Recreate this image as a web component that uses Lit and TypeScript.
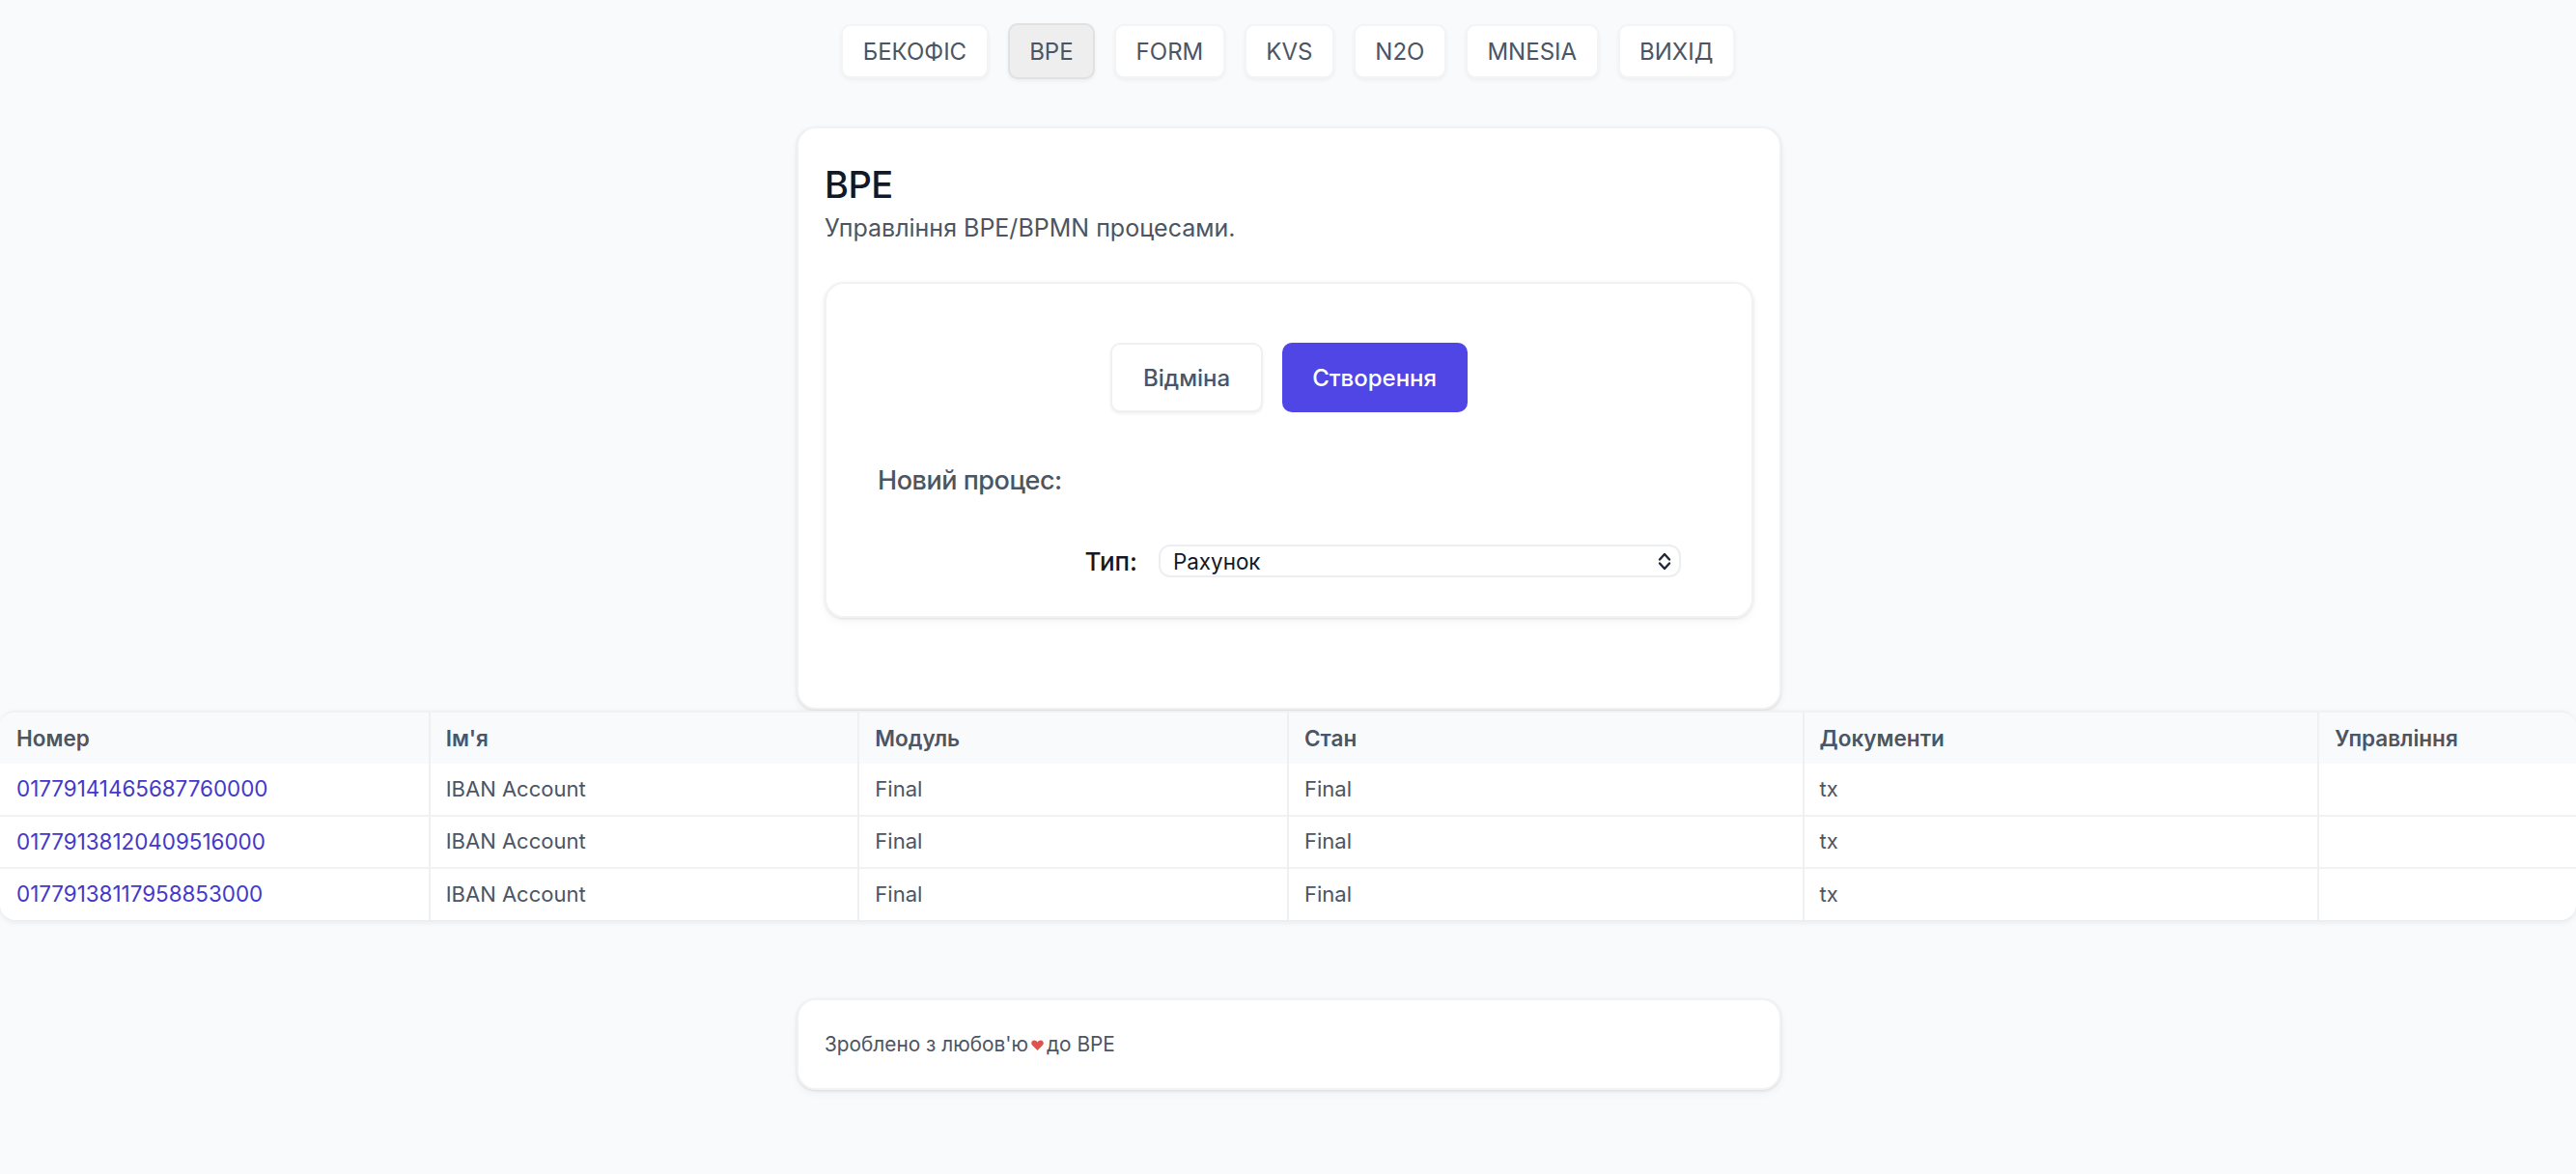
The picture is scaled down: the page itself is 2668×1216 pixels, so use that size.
import { LitElement, html, css } from "lit";
import { customElement } from "lit/decorators.js";

const NAV = ["БЕКОФІС", "BPE", "FORM", "KVS", "N2O", "MNESIA", "ВИХІД"];
const COLS = ["Номер", "Ім'я", "Модуль", "Стан", "Документи", "Управління"];
const ROWS = ["01779141465687760000", "01779138120409516000", "01779138117958853000"];

@customElement("app-root")
export class AppRoot extends LitElement {
  static styles = css`
    :host {
      display: block;
      min-height: 1216px;
      background: #f9fafb;
      font-family: Inter, "Noto Sans", sans-serif;
      color: #4b5563;
      --shadow: 0 1px 3px rgba(0, 0, 0, 0.1), 0 4px 10px rgba(0, 0, 0, 0.04);
    }
    .nav {
      display: flex;
      justify-content: center;
      align-items: center;
      gap: 20px;
      padding-top: 24px;
      height: 58px;
    }
    .nav button {
      height: 56px;
      padding: 0 20.5px;
      background: #fff;
      border: 2px solid #f3f4f6;
      border-radius: 10px;
      box-shadow: 0 2px 4px rgba(0, 0, 0, 0.05);
      font: 400 24px Inter, sans-serif;
      color: #4b5563;
    }
    .nav button.on {
      height: 58px;
      background: #eeeeef;
      border-color: #e0e1e3;
    }
    .card {
      box-sizing: border-box;
      width: 1020px;
      margin: 0 0 0 calc(50% - 509px);
      background: #fff;
      border: 2px solid #f1f2f4;
      border-radius: 20px;
      box-shadow: var(--shadow);
    }
    .main {
      margin-top: 49px;
      height: 604px;
      padding: 34px 27px 0;
    }
    h1 {
      margin: 0;
      font: 500 38px/48px Inter, sans-serif;
      color: #111827;
      letter-spacing: -0.5px;
    }
    .sub {
      margin: 5px 0 0;
      font: 400 25px/32px Inter, sans-serif;
    }
    .inner {
      box-sizing: border-box;
      height: 348px;
      margin-top: 40px;
      border: 2px solid #f1f2f4;
      border-radius: 20px;
      box-shadow: var(--shadow);
      padding: 61px 53px 0;
    }
    .actions {
      display: flex;
      justify-content: center;
      gap: 20px;
    }
    .actions button {
      height: 72px;
      border-radius: 10px;
      font: 500 24px Inter, sans-serif;
      padding: 0 31.5px;
    }
    .cancel {
      background: #fff;
      color: #4b5563;
      border: 2px solid #eff0f2;
      box-shadow: 0 2px 3px rgba(0, 0, 0, 0.06);
    }
    .create {
      background: #4f46e5;
      color: #fff;
      border: 0;
    }
    .new {
      margin: 51px 0 0;
      font: 500 27px/40px Inter, sans-serif;
      letter-spacing: -0.46px;
      color: #4b5563;
    }
    .field {
      display: flex;
      align-items: center;
      justify-content: flex-end;
      gap: 22px;
      margin-top: 46px;
      padding-right: 20px;
    }
    .field label {
      font: 500 26px Inter, sans-serif;
      color: #111827;
    }
    .sel {
      position: relative;
      width: 541px;
      height: 34px;
    }
    .sel select {
      appearance: none;
      box-sizing: border-box;
      width: 100%;
      height: 100%;
      padding: 0 40px 0 13px;
      background: #fff;
      border: 2px solid #eceef1;
      border-radius: 12px;
      font: 400 22.4px Inter, sans-serif;
      color: #111827;
    }
    .sel svg {
      position: absolute;
      right: 9px;
      top: 7px;
      width: 16px;
      height: 20px;
      pointer-events: none;
    }
    .table {
      box-sizing: border-box;
      margin-top: 1px;
      background: #fff;
      border-top: 2px solid #f0f1f3;
      border-radius: 16px;
      overflow: hidden;
      box-shadow: 0 2px 6px rgba(0, 0, 0, 0.08);
    }
    table {
      width: 100%;
      border-collapse: collapse;
      table-layout: fixed;
    }
    th,
    td {
      box-sizing: border-box;
      padding: 0 0 0 16px;
      text-align: left;
      border-left: 2px solid #eff0f2;
    }
    th:first-child,
    td:first-child {
      border-left: 0;
      padding-left: 17px;
    }
    th {
      height: 53px;
      background: #f9fafb;
      font: 600 22.5px Inter, sans-serif;
      color: #4b5563;
    }
    td {
      height: 54px;
      padding-bottom: 2px;
      font: 400 22px Inter, sans-serif;
      color: #4b5563;
    }
    tr + tr td {
      border-top: 2px solid #f1f2f4;
    }
    a {
      font-size: 22.4px;
      color: #4338ca;
      text-decoration: none;
    }
    .foot {
      margin-top: 81px;
      height: 95px;
      display: flex;
      align-items: center;
      padding: 0 27px;
      font: 400 20.8px Inter, sans-serif;
      gap: 3px;
    }
    .foot svg {
      width: 13px;
      height: 11px;
      margin-top: 2px;
    }
  `;

  render() {
    return html`
      <div class="nav">
        ${NAV.map((n) => html`<button class=${n === "BPE" ? "on" : ""}>${n}</button>`)}
      </div>
      <div class="card main">
        <h1>BPE</h1>
        <p class="sub">Управління BPE/BPMN процесами.</p>
        <div class="inner">
          <div class="actions">
            <button class="cancel">Відміна</button>
            <button class="create">Створення</button>
          </div>
          <p class="new">Новий процес:</p>
          <div class="field">
            <label>Тип:</label>
            <div class="sel">
              <select><option>Рахунок</option></select>
              <svg viewBox="0 0 16 20" fill="none" stroke="#1f2937" stroke-width="2.4" stroke-linecap="round" stroke-linejoin="round">
                <path d="M3 8.5L8 3l5 5.5M3 12.5L8 18l5-5.5" />
              </svg>
            </div>
          </div>
        </div>
      </div>
      <div class="table">
        <table>
          <colgroup>
            <col style="width:16.667%" /><col style="width:16.667%" /><col style="width:16.667%" />
            <col style="width:20%" /><col style="width:20%" /><col style="width:10%" />
          </colgroup>
          <thead>
            <tr>${COLS.map((c) => html`<th>${c}</th>`)}</tr>
          </thead>
          <tbody>
            ${ROWS.map(
              (r) => html`<tr>
                <td><a href="#">${r}</a></td>
                <td>IBAN Account</td>
                <td>Final</td>
                <td>Final</td>
                <td>tx</td>
                <td></td>
              </tr>`
            )}
          </tbody>
        </table>
      </div>
      <div class="card foot">
        <span>Зроблено з любов'ю</span>
        <svg viewBox="0 0 13 11"><path fill="#e0524d" d="M6.5 11L1 5.6C-.6 3.8.3.6 3.2.6c1.5 0 2.6.9 3.3 2 .7-1.1 1.8-2 3.3-2 2.9 0 3.8 3.2 2.2 5Z" /></svg>
        <span>до BPE</span>
      </div>
    `;
  }
}
